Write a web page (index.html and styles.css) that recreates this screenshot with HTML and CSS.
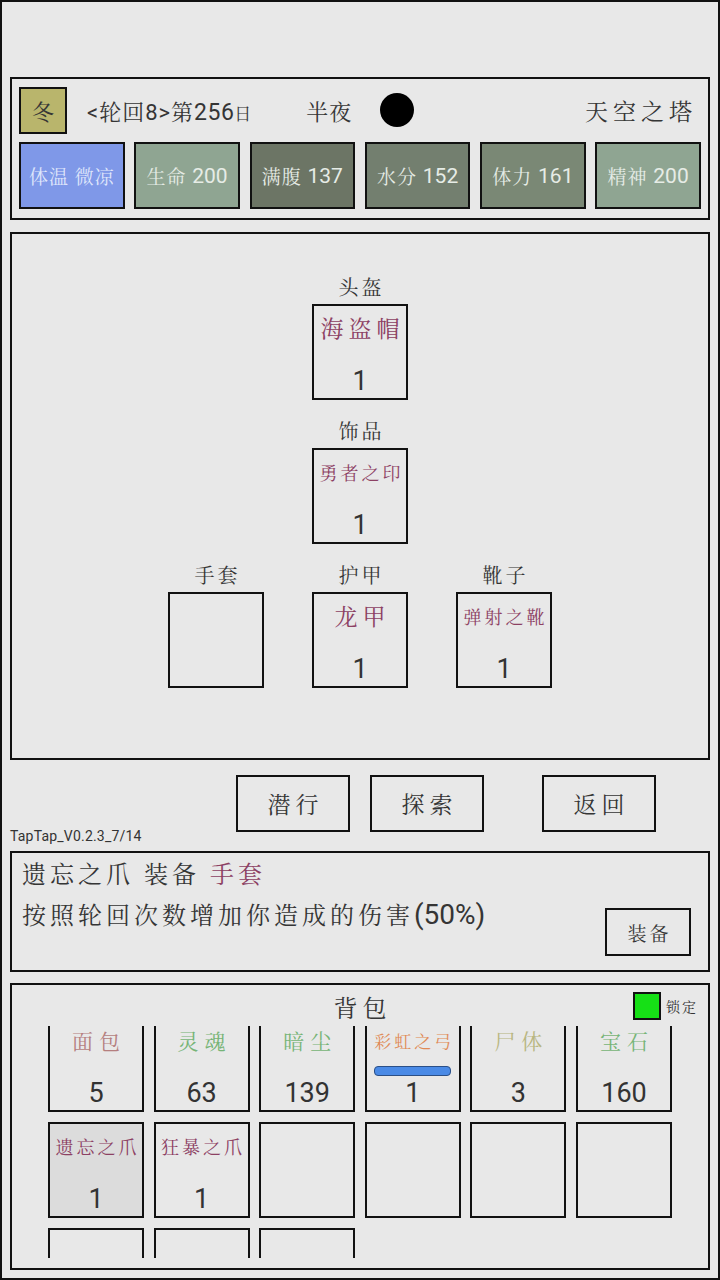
FILE: index.html
```html
<!DOCTYPE html>
<html lang="zh">
<head>
    <meta charset="UTF-8">
    <meta name="viewport" content="width=device-width, initial-scale=1.0">
    <title>天空之塔</title>
    <link rel="stylesheet" href="styles.css">
</head>
<body>
    <div class="screen">
        <!-- 状态栏 -->
        <section class="panel status">
            <div class="status-head">
                <div class="season">冬</div>
                <div class="clock">&lt;轮回8&gt;第<span class="clock-num">256</span><span class="day">日</span></div>
                <div class="phase">半夜</div>
                <div class="moon"></div>
                <div class="place">天空之塔</div>
            </div>
            <div class="stats">
                <div class="stat stat-temp">体温 微凉</div>
                <div class="stat stat-life">生命 <span class="stat-num">200</span></div>
                <div class="stat stat-food">满腹 <span class="stat-num">137</span></div>
                <div class="stat stat-water">水分 <span class="stat-num">152</span></div>
                <div class="stat stat-stamina">体力 <span class="stat-num">161</span></div>
                <div class="stat stat-spirit">精神 <span class="stat-num">200</span></div>
            </div>
        </section>

        <!-- 装备栏 -->
        <section class="panel gear">
            <div class="gear-row">
                <div class="slot">
                    <div class="slot-label">头盔</div>
                    <div class="cell">
                        <span class="name name-big gear-name">海盗帽</span>
                        <span class="count">1</span>
                    </div>
                </div>
            </div>
            <div class="gear-row">
                <div class="slot">
                    <div class="slot-label">饰品</div>
                    <div class="cell">
                        <span class="name name-small gear-name">勇者之印</span>
                        <span class="count">1</span>
                    </div>
                </div>
            </div>
            <div class="gear-row">
                <div class="slot">
                    <div class="slot-label">手套</div>
                    <div class="cell"></div>
                </div>
                <div class="slot">
                    <div class="slot-label">护甲</div>
                    <div class="cell">
                        <span class="name name-big gear-name">龙甲</span>
                        <span class="count">1</span>
                    </div>
                </div>
                <div class="slot">
                    <div class="slot-label">靴子</div>
                    <div class="cell">
                        <span class="name name-small gear-name">弹射之靴</span>
                        <span class="count">1</span>
                    </div>
                </div>
            </div>
        </section>

        <div class="actions">
            <button class="btn">潜行</button>
            <button class="btn">探索</button>
            <button class="btn btn-back">返回</button>
        </div>
        <div class="version">TapTap_V0.2.3_7/14</div>

        <!-- 物品说明 -->
        <section class="panel detail">
            <div class="detail-text">
                <div class="detail-line">遗忘之爪 装备 <span class="gear-name">手套</span></div>
                <div class="detail-line">按照轮回次数增加你造成的伤害<span class="num">(50%)</span></div>
            </div>
            <button class="btn btn-equip">装备</button>
        </section>

        <!-- 背包 -->
        <section class="panel bag">
            <div class="bag-head">
                <div></div>
                <div class="bag-title">背包</div>
                <div class="lock">
                    <span class="lock-box"></span>
                    <span class="lock-text">锁定</span>
                </div>
            </div>
            <div class="bag-view">
                <div class="bag-grid">
                    <div class="cell">
                        <span class="name name-pair item-food">面包</span>
                        <span class="count">5</span>
                    </div>
                    <div class="cell">
                        <span class="name name-pair item-soul">灵魂</span>
                        <span class="count">63</span>
                    </div>
                    <div class="cell">
                        <span class="name name-pair item-soul">暗尘</span>
                        <span class="count">139</span>
                    </div>
                    <div class="cell">
                        <span class="name name-small item-weapon">彩虹之弓</span>
                        <span class="durability"></span>
                        <span class="count">1</span>
                    </div>
                    <div class="cell">
                        <span class="name name-pair item-corpse">尸体</span>
                        <span class="count">3</span>
                    </div>
                    <div class="cell">
                        <span class="name name-pair item-soul">宝石</span>
                        <span class="count">160</span>
                    </div>
                    <div class="cell selected">
                        <span class="name name-small gear-name">遗忘之爪</span>
                        <span class="count">1</span>
                    </div>
                    <div class="cell">
                        <span class="name name-small gear-name">狂暴之爪</span>
                        <span class="count">1</span>
                    </div>
                    <div class="cell"></div>
                    <div class="cell"></div>
                    <div class="cell"></div>
                    <div class="cell"></div>
                    <div class="cell"></div>
                    <div class="cell"></div>
                    <div class="cell"></div>
                </div>
            </div>
        </section>
    </div>
</body>
</html>
```

FILE: styles.css
```css
body {
    margin: 0;
    background-color: #e8e8e8;
    font-family: Roboto, "Noto Serif CJK SC", "Noto Sans CJK SC", sans-serif;
    color: #353535;
}

.screen {
    width: 720px;
    height: 1280px;
    box-sizing: border-box;
    border: 2px solid #111;
    padding: 75px 8px 0;
    overflow: hidden;
}

.panel {
    border: 2px solid #111;
    background-color: #e8e8e8;
    box-sizing: border-box;
}

/* 状态栏 */
.status {
    height: 143px;
    padding: 7px;
}

.status-head {
    display: flex;
    align-items: center;
    height: 48px;
}

.season {
    width: 48px;
    height: 47px;
    box-sizing: border-box;
    border: 2px solid #111;
    background-color: #b9b56c;
    display: flex;
    align-items: center;
    justify-content: center;
    font-size: 22px;
}

.clock {
    margin-left: 20px;
    font-size: 22px;
    letter-spacing: 1px;
}

.clock-num {
    font-size: 23px;
    letter-spacing: 0.5px;
}

.day {
    font-size: 17px;
}

.phase {
    margin-left: 54px;
    font-size: 22px;
    letter-spacing: 1px;
}

.moon {
    width: 34px;
    height: 34px;
    margin-left: 28px;
    border-radius: 50%;
    background-color: #000;
}

.place {
    margin-left: auto;
    margin-right: 4px;
    font-size: 23px;
    letter-spacing: 5px;
}

.stats {
    display: grid;
    grid-template-columns: repeat(6, 1fr);
    column-gap: 9.6px;
    height: 67px;
    margin-top: 8px;
}

.stat {
    border: 2px solid #111;
    display: flex;
    align-items: center;
    justify-content: center;
    font-size: 19px;
    letter-spacing: 1px;
    color: #e6ece6;
    white-space: pre;
}

.stat-num {
    font-size: 21px;
    letter-spacing: 0;
}

.stat-temp { background-color: #7f98e8; color: #dfe6fb; }
.stat-life { background-color: #8fa592; }
.stat-food { background-color: #6c7565; }
.stat-water { background-color: #737f6f; }
.stat-stamina { background-color: #7a8875; }
.stat-spirit { background-color: #8fa592; }

/* 装备栏 */
.gear {
    height: 528px;
    margin-top: 12px;
    padding-top: 40px;
    display: flex;
    flex-direction: column;
    align-items: center;
}

.gear-row {
    display: flex;
    gap: 48px;
}

.gear-row + .gear-row {
    margin-top: 18px;
}

.slot {
    display: flex;
    flex-direction: column;
    align-items: center;
}

.slot-label {
    font-size: 20px;
    line-height: 28px;
    letter-spacing: 3px;
    text-indent: 3px;
    margin-bottom: 2px;
}

.cell {
    width: 96px;
    height: 96px;
    box-sizing: border-box;
    border: 2px solid #111;
    padding: 7px 0 2px;
    display: flex;
    flex-direction: column;
    align-items: center;
}

.cell.selected {
    background-color: #dcdcdc;
}

.name {
    line-height: 34px;
    white-space: nowrap;
}

.name-big {
    font-size: 23px;
    letter-spacing: 5px;
    text-indent: 5px;
}

.name-pair {
    font-size: 21px;
    letter-spacing: 6px;
    text-indent: 6px;
}

.name-small {
    font-size: 18px;
    letter-spacing: 3px;
    text-indent: 3px;
}

.count {
    margin-top: auto;
    font-size: 27px;
    line-height: 30px;
    color: #333;
}

.gear-name { color: #8c4063; }
.item-food { color: #b57f7f; }
.item-soul { color: #76b476; }
.item-weapon { color: #e08a56; font-size: 17px; }
.item-corpse { color: #b8b680; }

.durability {
    width: 77px;
    height: 10px;
    margin-top: 7px;
    box-sizing: border-box;
    border: 1px solid #2b4f86;
    border-radius: 4px;
    background-color: #4a8ae6;
}

/* 操作按钮 */
.actions {
    display: flex;
    padding-left: 226px;
    margin-top: 15px;
}

.btn {
    width: 114px;
    height: 57px;
    box-sizing: border-box;
    border: 2px solid #111;
    background-color: transparent;
    font-family: inherit;
    font-size: 23px;
    letter-spacing: 5px;
    text-indent: 5px;
    color: #353535;
    padding: 0;
}

.btn + .btn {
    margin-left: 20px;
}

.btn + .btn-back {
    margin-left: 58px;
}

.version {
    margin-top: -4px;
    font-size: 14px;
    line-height: 16px;
    letter-spacing: 0.2px;
    color: #333;
}

/* 物品说明 */
.detail {
    height: 121px;
    margin-top: 7px;
    padding: 2px 17px 0 10px;
    display: flex;
}

.detail-text {
    flex: 1;
}

.detail-line {
    font-size: 24px;
    line-height: 40px;
    letter-spacing: 4px;
    white-space: nowrap;
}

.num {
    font-size: 28px;
    letter-spacing: 0;
}

.btn-equip {
    width: 86px;
    height: 48px;
    margin-top: 53px;
    font-size: 19px;
    letter-spacing: 3px;
    text-indent: 3px;
}

/* 背包 */
.bag {
    height: 287px;
    margin-top: 11px;
}

.bag-head {
    display: grid;
    grid-template-columns: 1fr auto 1fr;
    align-items: start;
    height: 41px;
    box-sizing: border-box;
    padding: 7px 10px 0;
}

.bag-title {
    font-size: 24px;
    line-height: 33px;
    letter-spacing: 5px;
    text-indent: 5px;
    padding-top: 1px;
}

.lock {
    justify-self: end;
    display: flex;
    align-items: center;
    gap: 5px;
}

.lock-box {
    width: 28px;
    height: 28px;
    box-sizing: border-box;
    border: 2px solid #111;
    background-color: #16e016;
}

.lock-text {
    font-size: 14px;
    letter-spacing: 2px;
}

.bag-view {
    height: 232px;
    margin: 0 36px;
    overflow: hidden;
}

.bag-grid {
    display: grid;
    grid-template-columns: repeat(6, 96px);
    column-gap: 9.6px;
    row-gap: 10px;
    margin-top: -10px;
}
```
